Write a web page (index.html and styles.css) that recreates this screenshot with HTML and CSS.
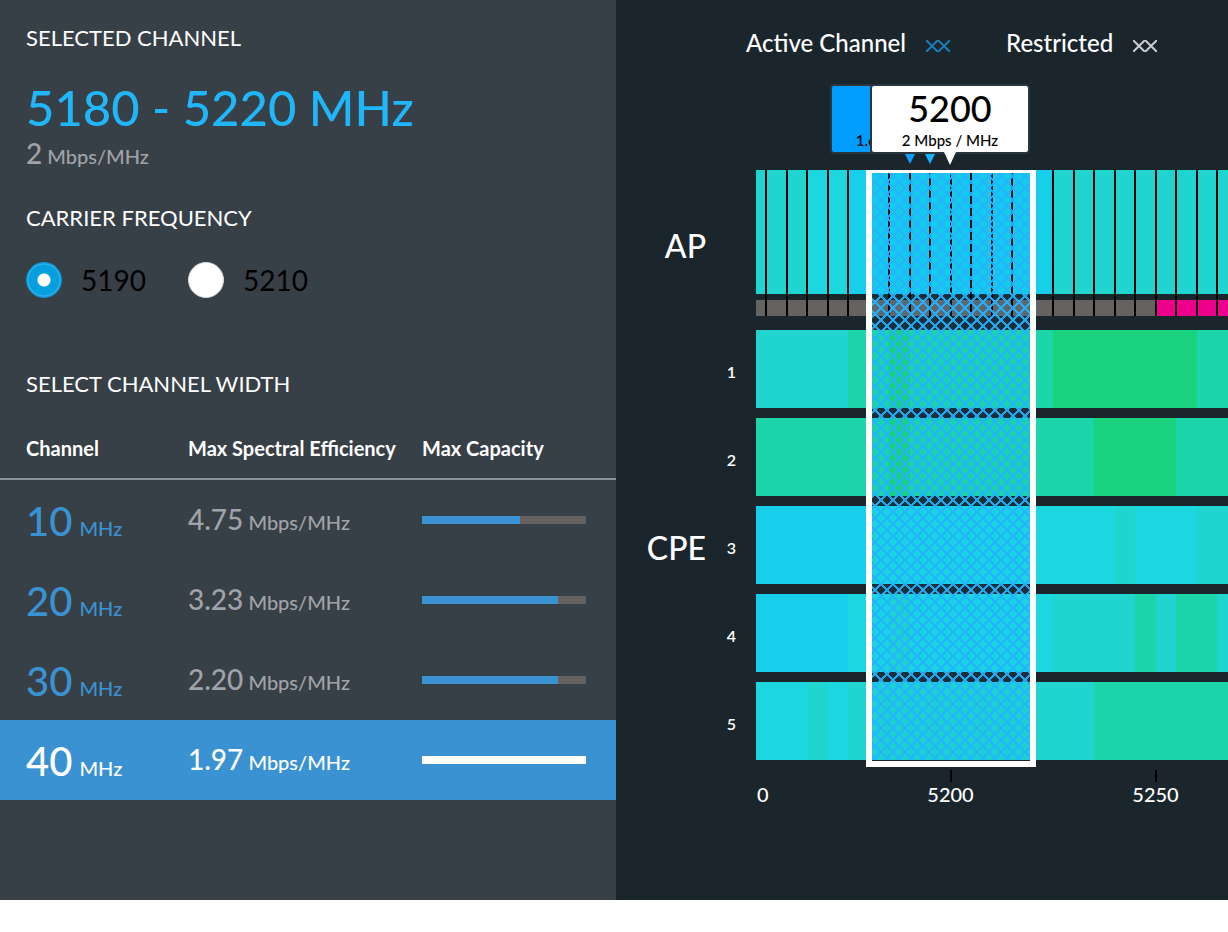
FILE: index.html
```html
<!DOCTYPE html>
<html lang="en">
<head>
<meta charset="utf-8">
<title>Channel selection</title>
<link rel="stylesheet" href="styles.css">
</head>
<body>
<main class="app">
  <section class="panel">
    <h2 class="heading">SELECTED CHANNEL</h2>
    <p class="range">5180 - 5220 MHz</p>
    <p class="rate"><span class="value">2</span> Mbps/MHz</p>

    <fieldset class="carrier">
      <legend class="heading">CARRIER FREQUENCY</legend>
      <div class="options">
        <label class="option"><input class="radio" type="radio" name="carrier" checked> 5190</label>
        <label class="option"><input class="radio" type="radio" name="carrier"> 5210</label>
      </div>
    </fieldset>

    <h2 class="heading width-heading">SELECT CHANNEL WIDTH</h2>
    <table class="widths">
      <thead>
        <tr><th class="col-channel">Channel</th><th class="col-rate">Max Spectral Efficiency</th><th>Max Capacity</th></tr>
      </thead>
      <tbody>
        <tr>
          <td class="channel"><span class="size">10</span> MHz</td>
          <td class="rate"><span class="value">4.75</span> Mbps/MHz</td>
          <td><div class="bar"><div class="fill" style="width:60%"></div></div></td>
        </tr>
        <tr>
          <td class="channel"><span class="size">20</span> MHz</td>
          <td class="rate"><span class="value">3.23</span> Mbps/MHz</td>
          <td><div class="bar"><div class="fill" style="width:83%"></div></div></td>
        </tr>
        <tr>
          <td class="channel"><span class="size">30</span> MHz</td>
          <td class="rate"><span class="value">2.20</span> Mbps/MHz</td>
          <td><div class="bar"><div class="fill" style="width:83%"></div></div></td>
        </tr>
        <tr class="selected">
          <td class="channel"><span class="size">40</span> MHz</td>
          <td class="rate"><span class="value">1.97</span> Mbps/MHz</td>
          <td><div class="bar"><div class="fill" style="width:100%"></div></div></td>
        </tr>
      </tbody>
    </table>
  </section>

  <section class="spectrum">
    <div class="key">
      <div class="key-item">Active Channel
        <svg class="hatch active" width="24" height="12" viewBox="0 0 24 12"><path d="M-1 -1L12 12L25 -1M-1 13L12 0L25 13"/></svg>
      </div>
      <div class="key-item">Restricted
        <svg class="hatch restricted" width="24" height="12" viewBox="0 0 24 12"><path d="M-1 -1L12 12L25 -1M-1 13L12 0L25 13"/></svg>
      </div>
    </div>

    <div class="chart">
      <div class="groups">
        <div class="group ap">AP</div>
        <div class="group cpe">CPE</div>
      </div>
      <ol class="lanes">
        <li>1</li><li>2</li><li>3</li><li>4</li><li>5</li>
      </ol>
      <div class="plot">
        <svg class="heat" height="610" shape-rendering="crispEdges">
          <defs>
            <pattern id="hatch" width="12" height="12" patternUnits="userSpaceOnUse" x="119" y="0">
              <path d="M-2 -2L14 14M14 -2L-2 14" class="weave"/>
            </pattern>
            <pattern id="grid" width="41" height="146" patternUnits="userSpaceOnUse" x="9">
              <rect width="2" height="146" class="ink"/><rect x="21" width="2" height="146" class="ink"/>
            </pattern>
          </defs>
          <rect class="c2" width="100%" height="124"/>
          <rect class="c1" x="51" width="41" height="124"/>
          <rect class="c0" x="92" width="205" height="124"/>
          <rect class="idle" y="130" width="100%" height="16"/>
          <rect class="hot" x="400" y="130" width="100%" height="16"/>

          <g transform="translate(0 160)">
            <rect class="c3" width="100%" height="78"/>
            <rect class="c2" width="92" height="78"/>
            <rect class="c4" x="133" width="21" height="78"/>
            <rect class="c4" x="297" width="144" height="78"/>
          </g>
          <g transform="translate(0 248)">
            <rect class="c3" width="100%" height="78"/>
            <rect class="c4" x="133" width="21" height="78"/>
            <rect class="c4" x="338" width="82" height="78"/>
          </g>
          <g transform="translate(0 336)">
            <rect class="c1" width="100%" height="78"/>
            <rect class="c0" width="113" height="78"/>
            <rect class="c2" x="359" width="20" height="78"/>
            <rect class="c2" x="441" width="100%" height="78"/>
          </g>
          <g transform="translate(0 424)">
            <rect class="c1" width="100%" height="78"/>
            <rect class="c0" width="92" height="78"/>
            <rect class="c2" x="133" width="21" height="78"/>
            <rect class="c2" x="297" width="100%" height="78"/>
            <rect class="c3" x="379" width="21" height="78"/>
            <rect class="c3" x="420" width="41" height="78"/>
          </g>
          <g transform="translate(0 512)">
            <rect class="c2" width="100%" height="78"/>
            <rect class="c1" width="51" height="78"/>
            <rect class="c1" x="71" width="21" height="78"/>
            <rect class="c3" x="338" width="100%" height="78"/>
          </g>

          <rect fill="url(#grid)" x="9" width="100%" height="146"/>
          <g shape-rendering="auto">
            <rect class="tint" x="116" y="3" width="158" height="587"/>
            <rect fill="url(#hatch)" x="116" y="3" width="158" height="587"/>
          </g>
          <path class="frame" fill-rule="evenodd" d="M110 0H280V597H110ZM116 3V591H274V3Z"/>
          <path class="ink" d="M194 600h2v12h-2zM399 600h2v12h-2z"/>
        </svg>
        <div class="tip low"><span class="detail">1.6 Mbps / MHz</span></div>
        <div class="tip mid"></div>
        <div class="tip top"><strong class="freq">5200</strong><span class="detail">2 Mbps / MHz</span></div>
        <div class="axis">
          <span class="tick first">0</span><span class="tick">5200</span><span class="tick">5250</span>
        </div>
      </div>
    </div>
  </section>
</main>
</body>
</html>
```
FILE: styles.css
```css
* { box-sizing: border-box; }

body {
  margin: 0;
  background: #fff;
  color: #fff;
  font-family: Lato, "Liberation Sans", sans-serif;
  font-size: 20px;
  font-weight: 500;
}

.app {
  display: grid;
  grid-template-columns: 616px minmax(0, 1fr);
  min-height: 900px;
}

/* Channel panel */
.panel { background: #384047; padding-top: 24px; }

.heading {
  margin: 0;
  padding: 0 26px;
  font-size: 22px;
  font-weight: 400;
  line-height: 28px;
}

.range {
  margin: 24px 26px 0;
  color: #1fb6fa;
  font-size: 49px;
  line-height: 62px;
}

.rate { margin: 0; color: #a0a3a8; line-height: 30px; }
.panel > .rate { padding: 0 26px; }
.value { font-size: 28px; }

.carrier { margin: 33px 0 0; padding: 0; border: 0; }
.options { display: flex; gap: 42px; padding: 30px 26px 0; }

.option {
  display: flex;
  align-items: center;
  gap: 19px;
  color: #000;
  font-size: 28px;
  font-weight: 400;
  line-height: 36px;
}

.radio {
  appearance: none;
  width: 36px;
  height: 36px;
  margin: 0;
  border: 1px solid #d5d8da;
  border-radius: 50%;
  background: #fff;
}
.radio:checked {
  border: 1px solid #0a9bdc;
  background: radial-gradient(circle, #fff 0 6px, #059fe0 7px 15px, #3bb3e6 16px, #059fe0 17px);
}

.width-heading { margin-top: 72px; }

.widths {
  width: 100%;
  margin-top: 36px;
  border-collapse: separate;
  border-spacing: 0;
  table-layout: fixed;
}
.widths th {
  height: 46px;
  padding: 0 0 16px;
  border-bottom: 2px solid #8b929b;
  text-align: left;
  font-weight: 700;
  line-height: 28px;
}
.widths th:first-child, .widths td:first-child { padding-left: 26px; }
.widths td { height: 80px; padding: 0; vertical-align: middle; }
.widths .channel { padding-top: 8px; }
.widths td:last-child { padding-right: 30px; }
.col-channel { width: 188px; }
.col-rate { width: 234px; }
.channel { color: #3a92d2; line-height: 48px; }
.size { margin-right: 2px; font-size: 40px; }

.bar { height: 8px; background: #65625f; }
.fill { height: 8px; background: #3a92d2; }

.selected { background: #3a92d2; }
.selected .channel, .selected .rate { color: #fff; }
.selected .fill { background: #fff; }

/* Spectrum view */
.spectrum { background: #1b262c; overflow: hidden; }

.key { display: flex; gap: 56px; padding: 27px 0 0 130px; }
.key-item {
  display: flex;
  align-items: center;
  gap: 20px;
  font-size: 24px;
  line-height: 32px;
  white-space: nowrap;
}
.hatch { fill: none; stroke-width: 2; margin-top: 6px; }
.active { stroke: #1c7db6; }
.restricted { stroke: #c9cdcf; }

.chart {
  display: grid;
  grid-template-columns: 90px 30px minmax(0, 1fr);
  padding-top: 111px;
}

.groups { font-size: 32px; line-height: 40px; text-align: right; }
.ap { padding-top: 56px; }
.cpe { padding-top: 262px; }

.lanes {
  display: grid;
  grid-auto-rows: 78px;
  align-content: start;
  gap: 10px;
  margin: 160px 0 0;
  padding: 0;
  list-style: none;
  font-size: 16px;
  font-weight: 600;
  line-height: 84px;
  text-align: right;
}

.plot { position: relative; margin-left: 20px; }
.heat { display: block; width: 100%; height: 612px; }

.c0 { fill: #17cfea; }
.c1 { fill: #1cd6e0; }
.c2 { fill: #20d5d0; }
.c3 { fill: #1dd5aa; }
.c4 { fill: #1bd37e; }
.idle { fill: #656262; }
.hot { fill: #ec008c; }
.ink { fill: #000; }
.frame { fill: #fff; }
.tint { fill: #00a0ff; fill-opacity: 0.08; }
.weave { fill: none; stroke: #24b4ff; stroke-opacity: 0.9; stroke-width: 2; }

.axis { display: grid; grid-template-columns: 92px 205px 205px; line-height: 24px; }
.tick { text-align: center; }
.first { text-align: left; padding-left: 1px; }

/* Frequency markers floating over the plot */
.tip {
  position: absolute;
  bottom: calc(100% + 16px);
  display: flex;
  flex-direction: column;
  justify-content: flex-end;
  align-items: center;
  width: 160px;
  height: 70px;
  padding-bottom: 1px;
  border: 2px solid #2a363f;
  border-radius: 4px;
  color: #000;
}
.tip::after {
  content: "";
  position: absolute;
  top: 100%;
  border: 5px solid transparent;
  border-top-width: 10px;
  border-bottom-width: 0;
  margin-top: 2px;
}
.low { left: 74px; background: #009cff; }
.low::after { border-top-color: #109cff; }
.mid { left: 94px; border-color: transparent; }
.mid::after { border-top-color: #14b4ff; }
.top { left: 114px; background: #fff; }
.top::after { border-width: 13px 6px 0; border-top-color: #fff; margin-top: 0; }
.freq { font-size: 36px; font-weight: 500; line-height: 42px; }
.detail { font-size: 15px; line-height: 22px; white-space: nowrap; }
```
